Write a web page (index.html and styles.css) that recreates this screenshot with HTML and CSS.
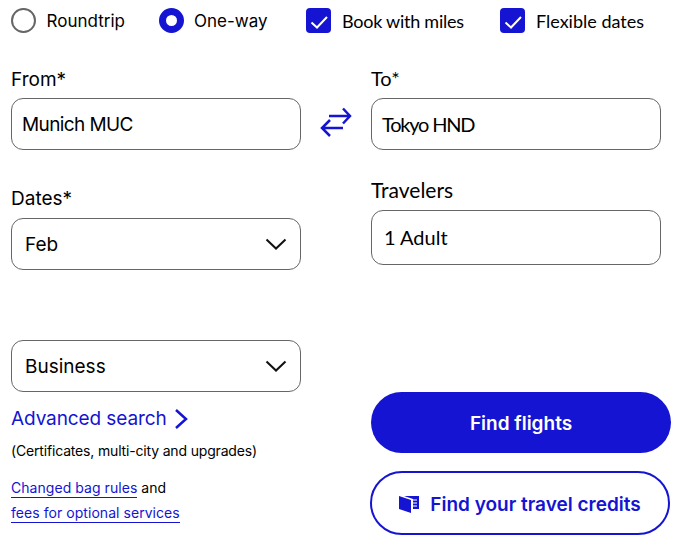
FILE: index.html
```html
<!DOCTYPE html>
<html lang="en">
  <head>
    <meta charset="utf-8" />
    <title>Find flights</title>
    <link rel="stylesheet" href="styles.css">
  </head>
  <body>
    <form class="booking">
      <div class="options">
        <div class="option opt-round"><span class="radio"></span><span>Roundtrip</span></div>
        <div class="option opt-oneway"><span class="radio on"></span><span>One-way</span></div>
        <div class="option opt-miles lato">
          <span class="check"><svg viewBox="0 0 24 24" width="24" height="24"><path d="M4.500 13.500l5.500 5 10-10.500" fill="none" stroke="#fff" stroke-width="2"/></svg></span>
          <span>Book with miles</span>
        </div>
        <div class="option lato">
          <span class="check"><svg viewBox="0 0 24 24" width="24" height="24"><path d="M4.500 13.500l5.500 5 10-10.500" fill="none" stroke="#fff" stroke-width="2"/></svg></span>
          <span>Flexible dates</span>
        </div>
      </div>

      <div class="columns">
        <div class="col-left">
          <label class="label label-from">From*</label>
          <div class="field city">Munich MUC</div>

          <label class="label label-dates">Dates*</label>
          <div class="field select">
            <span>Feb</span>
            <svg class="chevron" viewBox="0 0 22 12" width="22" height="12"><path d="M1.500 1.500l9.500 9 9.500-9" fill="none" stroke="#111" stroke-width="2"/></svg>
          </div>

          <div class="field select cabin">
            <span>Business</span>
            <svg class="chevron" viewBox="0 0 22 12" width="22" height="12"><path d="M1.500 1.500l9.500 9 9.500-9" fill="none" stroke="#111" stroke-width="2"/></svg>
          </div>

          <a class="advanced">Advanced search
            <svg viewBox="0 0 14 20" width="14" height="20"><path d="M2 1l10 9-10 9" fill="none" stroke="#1414d2" stroke-width="2.500"/></svg>
          </a>
          <p class="note">(Certificates, multi-city and upgrades)</p>
          <p class="bags"><a>Changed bag rules</a> and</p>
          <p class="bags"><a>fees for optional services</a></p>
        </div>

        <div class="swap">
          <svg viewBox="0 0 32 32" width="32" height="32"><path d="M9 10H30M23 2.500l7 7.500-7 7.500M23 22H2M10 14l-8 8 8 8" fill="none" stroke="#1414d2" stroke-width="2.500"/></svg>
        </div>

        <div class="col-right">
          <label class="label label-to lato">To*</label>
          <div class="field lato">Tokyo HND</div>

          <label class="label label-travelers lato">Travelers</label>
          <div class="field travelers lato">1 Adult</div>

          <button type="button" class="btn btn-find">Find flights</button>
          <button type="button" class="btn btn-credits">
            <svg viewBox="0 0 20 18" width="20" height="18"><path d="M0 1l12 4v13L0 14z" fill="#1414d2"/><path d="M5 1h15v13h-6V4z" fill="#1414d2"/><path d="M14 5h4M14 8h4M14 11h4" stroke="#fff" stroke-width="1"/></svg>
            <span>Find your travel credits</span>
          </button>
        </div>
      </div>
    </form>
  </body>
</html>
```

FILE: styles.css
```css
body {
  margin: 0;
  background-color: #fff;
  color: #000;
  font-family: "Inter", sans-serif;
}

.lato {
  font-family: "Lato", sans-serif;
}

.booking {
  padding: 8px 0 0 11px;
}

.options {
  display: flex;
  height: 25px;
  font-size: 17px;
}

.option {
  display: flex;
  align-items: center;
  gap: 11px;
  margin-right: 34px;
}

.option.lato {
  font-size: 18px;
}

.opt-round {
  width: 114px;
  margin-right: 34px;
}

.opt-oneway {
  width: 113px;
  gap: 10px;
}

.opt-miles {
  width: 160px;
  letter-spacing: -0.25px;
}

.radio {
  width: 25px;
  height: 25px;
  box-sizing: border-box;
  border: 2px solid #666;
  border-radius: 50%;
}

.radio.on {
  border: 7px solid #1414d2;
}

.check {
  width: 25px;
  height: 25px;
  background-color: #1414d2;
  border-radius: 4px;
}

.check svg {
  display: block;
  margin: 0.5px;
}

.columns {
  display: flex;
  margin-top: 34px;
}

.col-left {
  width: 290px;
}

.col-right {
  width: 300px;
}

.swap {
  width: 70px;
  padding-top: 39px;
  box-sizing: border-box;
  display: flex;
  justify-content: center;
  align-items: flex-start;
  height: 92px;
}

.label {
  display: block;
  font-size: 19px;
  line-height: 24px;
  margin-top: 0;
  margin-bottom: 7px;
}

.label-from {
  padding-top: 1px;
  margin-bottom: 6px;
}

.label-to {
  font-size: 20px;
  margin-top: -1px;
  margin-bottom: 8px;
}

.label-dates {
  margin-top: 37px;
  margin-bottom: 7px;
}

.label-travelers {
  font-size: 21px;
  margin-top: 28px;
  margin-bottom: 8px;
}

.field {
  box-sizing: border-box;
  width: 290px;
  height: 52px;
  border: 1px solid #666;
  border-radius: 12px;
  font-size: 19px;
  letter-spacing: -0.6px;
  display: flex;
  align-items: center;
  padding-left: 10px;
}

.field.lato {
  font-size: 20px;
  letter-spacing: -1.2px;
}

.city {
  padding-top: 1px;
}

.select {
  justify-content: space-between;
  padding: 0 13px;
  letter-spacing: 0;
}

.cabin {
  margin-top: 70px;
}

.field.travelers {
  height: 55px;
  padding-left: 12px;
  padding-bottom: 2px;
  letter-spacing: 0;
}

.advanced {
  display: flex;
  align-items: center;
  gap: 7px;
  margin-top: 15px;
  color: #1414d2;
  font-size: 19px;
  line-height: 24px;
  letter-spacing: -0.1px;
}

.note {
  margin: 10px 0 0;
  font-size: 14px;
  line-height: 20px;
  letter-spacing: -0.17px;
}

.bags {
  margin: 0;
  font-size: 14px;
  line-height: 25px;
  letter-spacing: 0.05px;
}

.note + .bags {
  margin-top: 14px;
}

.bags a {
  color: #1414d2;
  border-bottom: 1px solid #1414d2;
  padding-bottom: 1px;
}

.btn {
  display: flex;
  align-items: center;
  justify-content: center;
  box-sizing: border-box;
  width: 300px;
  padding-top: 2px;
  font-family: "Inter", sans-serif;
  font-size: 19px;
  font-weight: 600;
  border-radius: 32px;
  cursor: pointer;
}

.btn-find {
  height: 61px;
  margin-top: 127px;
  border: 0;
  background-color: #1414d2;
  color: #fff;
}

.btn-credits {
  gap: 11px;
  height: 64px;
  margin-top: 18px;
  margin-left: -1px;
  padding-top: 3px;
  border: 2px solid #1414d2;
  background-color: #fff;
  color: #1414d2;
}
```
